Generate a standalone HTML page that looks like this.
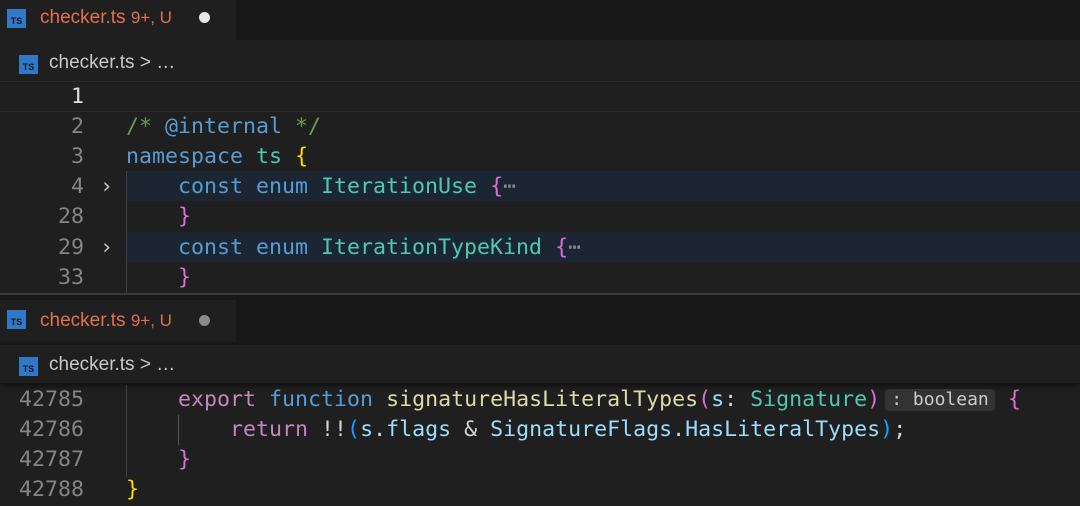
<!DOCTYPE html><html><head><style>
body{margin:0;width:1080px;height:506px;background:#1f1f1f;overflow:hidden;position:relative;font-family:"Liberation Sans",sans-serif}
.a{position:absolute}
.tabbar{left:0;width:1080px;height:40px;background:#181818}
.tab{left:0;width:236px;height:40px;background:#1f1f1f}
.ts{position:absolute;width:19px;height:19px;background:#3178c6;color:#0d1a2a;font:bold 9px "Liberation Sans",sans-serif;text-align:center;line-height:24px;box-sizing:border-box}
.tn{font-size:19px;color:#e2714d;white-space:pre}
.bc{font-size:19px;color:#c8c8c8;white-space:pre}
.code{font-family:"DejaVu Sans Mono",monospace;font-size:21.6px;line-height:30px;white-space:pre;color:#d4d4d4}
.ln{font-family:"DejaVu Sans Mono",monospace;font-size:21.6px;line-height:30px;color:#858585;text-align:right;width:84px;left:0}
.k{color:#569cd6}.p{color:#c586c0}.t{color:#4ec9b0}.f{color:#dcdcaa}.v{color:#9cdcfe}.c{color:#6a9955}.y{color:#ffd700}.m{color:#da70d6}.b{color:#179fff}
</style></head><body>
<div class="a tabbar" style="top:0"></div><div class="a tab" style="top:0"></div>
<div class="ts" style="left:7px;top:9px">TS</div>
<div class="a tn" style="left:40px;top:7px">checker.ts <span style="font-size:17px">9+, U</span></div>
<div class="a" style="left:199px;top:12px;width:11px;height:11px;border-radius:50%;background:#e8e8e8"></div>
<div class="ts" style="left:19px;top:55px">TS</div>
<div class="a bc" style="left:49px;top:52px">checker.ts &gt; …</div>
<div class="a" style="left:0;top:81px;width:1080px;height:29px;border-top:1px solid #2a2a2a;border-bottom:1px solid #2a2a2a"></div>
<div class="a" style="left:126px;top:171px;width:954px;height:30px;background:#1c2633"></div>
<div class="a" style="left:126px;top:232px;width:954px;height:30px;background:#1c2633"></div>
<div class="a" style="left:126px;top:171px;width:1px;height:122px;background:#404040"></div>
<div class="a ln" style="top:82px;color:#e0e0e0">1</div>
<div class="a ln" style="top:112px">2</div><div class="a ln" style="top:142px">3</div><div class="a ln" style="top:172px">4</div><div class="a ln" style="top:202px">28</div><div class="a ln" style="top:233px">29</div><div class="a ln" style="top:263px">33</div>
<div class="a code" style="left:100px;top:172px;color:#c5c5c5">›</div><div class="a code" style="left:100px;top:233px;color:#c5c5c5">›</div>
<div class="a code" style="left:126px;top:112px"><span class="c">/* </span><span class="k">@internal</span><span class="c"> */</span></div>
<div class="a code" style="left:126px;top:142px"><span class="k">namespace</span> <span class="t">ts</span> <span class="y">{</span></div>
<div class="a code" style="left:126px;top:172px">    <span class="k">const enum</span> <span class="t">IterationUse</span> <span class="m">{</span><span style="color:#888">⋯</span></div>
<div class="a code" style="left:126px;top:202px">    <span class="m">}</span></div>
<div class="a code" style="left:126px;top:233px">    <span class="k">const enum</span> <span class="t">IterationTypeKind</span> <span class="m">{</span><span style="color:#888">⋯</span></div>
<div class="a code" style="left:126px;top:263px">    <span class="m">}</span></div>
<div class="a" style="left:0;top:293px;width:1080px;height:2px;background:#3a3a3a"></div>
<div class="a tabbar" style="top:295px;height:50px"></div><div class="a tab" style="top:300px;height:42px"></div>
<div class="ts" style="left:7px;top:310px">TS</div>
<div class="a tn" style="left:40px;top:310px">checker.ts <span style="font-size:17px">9+, U</span></div>
<div class="a" style="left:199px;top:315px;width:11px;height:11px;border-radius:50%;background:#8a8a8a"></div>
<div class="a" style="left:0;top:345px;width:1080px;height:38px;background:#1f1f1f;box-shadow:0 3px 4px #111"></div>
<div class="ts" style="left:19px;top:357px">TS</div>
<div class="a bc" style="left:49px;top:354px">checker.ts &gt; …</div>
<div class="a" style="left:126px;top:385px;width:1px;height:92px;background:#404040"></div>
<div class="a" style="left:178px;top:415px;width:1px;height:30px;background:#555"></div>
<div class="a ln" style="top:385px">42785</div><div class="a ln" style="top:415px">42786</div><div class="a ln" style="top:445px">42787</div><div class="a ln" style="top:475px">42788</div>
<div class="a code" style="left:126px;top:385px">    <span class="p">export</span> <span class="k">function</span> <span class="f">signatureHasLiteralTypes</span><span class="m">(</span><span class="v">s</span>: <span class="t">Signature</span><span class="m">)</span></div>
<div class="a" style="left:885px;top:389px;width:110px;height:22px;background:#333;border-radius:4px;color:#ccc;font:18px 'DejaVu Sans Mono',monospace;line-height:22px;text-align:center">: boolean</div>
<div class="a code" style="left:1008px;top:385px"><span class="m">{</span></div>
<div class="a code" style="left:126px;top:415px">        <span class="p">return</span> !!<span class="b">(</span><span class="v">s</span>.<span class="v">flags</span> &amp; <span class="v">SignatureFlags</span>.<span class="v">HasLiteralTypes</span><span class="b">)</span>;</div>
<div class="a code" style="left:126px;top:445px">    <span class="m">}</span></div>
<div class="a code" style="left:126px;top:475px"><span class="y">}</span></div>
</body></html>
